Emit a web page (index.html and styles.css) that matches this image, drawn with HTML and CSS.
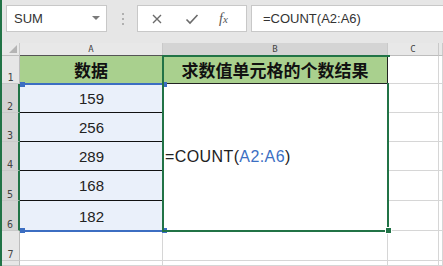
FILE: index.html
```html
<!DOCTYPE html>
<html lang="zh">
<head>
<meta charset="utf-8">
<link rel="stylesheet" href="styles.css">
</head>
<body>
<div class="app">
  <div class="fbar">
    <div class="namebox">
      <span class="name">SUM</span>
      <svg class="dd" width="10" height="6" viewBox="0 0 10 6"><polygon points="1,1 9,1 5,5" fill="#7a7a7a"/></svg>
    </div>
    <svg class="dots" width="4" height="14" viewBox="0 0 4 14"><rect x="1" y="1" width="2" height="2" fill="#b0b0b0"/><rect x="1" y="6" width="2" height="2" fill="#b0b0b0"/><rect x="1" y="11" width="2" height="2" fill="#b0b0b0"/></svg>
    <div class="btns">
      <svg class="ico" width="12" height="12" viewBox="0 0 12 12"><path d="M2 2 L10 10 M10 2 L2 10" stroke="#6b6b6b" stroke-width="1.4" fill="none"/></svg>
      <svg class="ico" width="14" height="12" viewBox="0 0 14 12"><path d="M1.5 6.5 L5 10 L12.5 2" stroke="#6b6b6b" stroke-width="1.6" fill="none"/></svg>
      <span class="fx">f<span class="x">x</span></span>
    </div>
    <div class="formula">=COUNT(A2:A6)</div>
  </div>
  <div class="sheet">
    <div class="ch corner"><svg width="8" height="8" viewBox="0 0 8 8"><polygon points="8,0 8,8 0,8" fill="#b4b4b4"/></svg></div>
    <div class="ch chA">A</div>
    <div class="ch chB sel-h">B</div>
    <div class="ch">C</div>
    <div class="ch"></div>

    <div class="rh">1</div>
    <div class="c hdr hA">数据</div>
    <div class="c hdr hB">求数值单元格的个数结果</div>
    <div class="c"></div>
    <div class="c"></div>

    <div class="rh sel-r">2</div>
    <div class="c data">159</div>
    <div class="c merged">=COUNT(<span class="ref-t">A2:A6</span>)</div>
    <div class="c"></div>
    <div class="c"></div>

    <div class="rh sel-r">3</div>
    <div class="c data">256</div>
    <div class="c"></div>
    <div class="c"></div>

    <div class="rh sel-r">4</div>
    <div class="c data">289</div>
    <div class="c"></div>
    <div class="c"></div>

    <div class="rh sel-r">5</div>
    <div class="c data">168</div>
    <div class="c"></div>
    <div class="c"></div>

    <div class="rh sel-r">6</div>
    <div class="c data last">182</div>
    <div class="c"></div>
    <div class="c"></div>

    <div class="rh">7</div>
    <div class="c"></div>
    <div class="c"></div>
    <div class="c"></div>
    <div class="c"></div>

    <div class="rh"></div>
    <div class="c"></div>
    <div class="c"></div>
    <div class="c"></div>
    <div class="c"></div>

    <div class="ref"></div>
    <div class="knob k1"></div>
    <div class="knob k2"></div>
    <div class="knob k3"></div>
    <div class="knob k4"></div>
    <div class="sel"></div>
    <div class="sel-right"></div>
    <div class="handle"></div>
  </div>
</div>
</body>
</html>
```
FILE: styles.css
```css
* { box-sizing: border-box; }
html, body { margin: 0; padding: 0; }
body {
  width: 443px;
  height: 266px;
  overflow: hidden;
  background: #ffffff;
  font-family: "Liberation Sans", "Noto Sans CJK SC", sans-serif;
}
.app {
  height: 266px;
  border-left: 2px solid #217346;
  display: flex;
  flex-direction: column;
}
.fbar {
  height: 43px;
  flex: none;
  background: #e6e6e6;
  display: flex;
  align-items: flex-start;
  padding-top: 5px;
  padding-left: 4px;
}
.namebox {
  width: 101px;
  height: 27px;
  background: #fff;
  border: 1px solid #c8c8c8;
  display: flex;
  align-items: center;
  justify-content: space-between;
  padding: 0 5px 0 7px;
}
.name { font-size: 13px; color: #333; }
.dd { margin-top: -2px; }
.dots { margin: 7px 0 0 14px; }
.btns {
  margin-left: 12px;
  width: 110px;
  height: 27px;
  background: #fff;
  border: 1px solid #c8c8c8;
  display: flex;
  align-items: center;
  padding-left: 13px;
  gap: 22px;
}
.ico { display: block; }
.fx {
  font-family: "Liberation Serif", serif;
  font-style: italic;
  font-size: 14px;
  color: #555;
  margin-left: -2px;
}
.fx .x { font-size: 11px; }
.formula {
  margin-left: 4px;
  flex: 1;
  height: 27px;
  background: #fff;
  border: 1px solid #c8c8c8;
  border-right: none;
  font-size: 13px;
  color: #333;
  padding-left: 11px;
  line-height: 25px;
}
.sheet {
  position: relative;
  flex: 1;
  display: grid;
  grid-template-columns: 18px 143px 225px 51px 1fr;
  grid-template-rows: 13px 28px 29px 29px 29px 30px 30px 30px 1fr;
}
.ch {
  background: #e8e8e8;
  border-right: 1px solid #c9c9c9;
  border-bottom: 1px solid #bdbdbd;
  font-size: 9px;
  color: #444;
  text-align: center;
  line-height: 12px;
  font-family: "DejaVu Sans Mono", monospace;
}
.corner { display: flex; align-items: flex-end; justify-content: flex-end; padding: 0 2px 2px 0; }
.corner svg { display: block; }
.chA { border-bottom: 1px solid #555; }
.sel-h { background: #d4d4d4; border-bottom: 1px solid #217346; }
.rh {
  background: #e6e6e6;
  border-right: 1px solid #bdbdbd;
  border-bottom: 1px solid #c9c9c9;
  font-size: 10px;
  color: #444;
  font-family: "DejaVu Sans Mono", monospace;
  display: flex;
  align-items: flex-end;
  justify-content: center;
  padding-bottom: 0;
  line-height: 11px;
}
.sel-r { background: #d3d3d3; border-right: 2px solid #217346; }
.c {
  border-right: 1px solid #d6d6d6;
  border-bottom: 1px solid #d6d6d6;
}
.hdr {
  background: #a9d08e;
  font-family: "Noto Sans CJK SC", sans-serif;
  font-weight: bold;
  font-size: 17px;
  color: #111;
  display: flex;
  align-items: center;
  justify-content: center;
  border-right: 1px solid #222;
  border-bottom: 1px solid #222;
}
.data {
  background: #eaf0fa;
  font-size: 15px;
  color: #222;
  display: flex;
  align-items: center;
  justify-content: center;
  border-bottom: 1px solid #111;
  border-right: none;
}
.data.last { border-bottom: none; }
.merged {
  grid-row: span 5;
  display: flex;
  align-items: center;
  padding-left: 2px;
  font-size: 16px;
  letter-spacing: 0.4px;
  color: #222;
}
.ref-t { color: #3b6fc3; }
.ref {
  position: absolute;
  left: 18px;
  top: 40px;
  width: 144px;
  height: 149px;
  border-top: 2px solid #3c6ec2;
  border-bottom: 2px solid #3c6ec2;
}
.knob {
  position: absolute;
  width: 5px;
  height: 5px;
  background: #3c6ec2;
}
.k1 { left: 18px; top: 39px; }
.k2 { left: 160px; top: 39px; }
.k3 { left: 18px; top: 185px; }
.k4 { left: 160px; top: 185px; }
.sel {
  position: absolute;
  left: 160px;
  top: 12px;
  width: 228px;
  height: 177px;
  border: 2px solid #217346;
  border-right: none;
}
.sel-right {
  position: absolute;
  left: 385px;
  top: 40px;
  width: 2px;
  height: 144px;
  background: #217346;
}
.handle {
  position: absolute;
  left: 383px;
  top: 184px;
  width: 7px;
  height: 7px;
  background: #217346;
  border: 1px solid #fff;
}
```
